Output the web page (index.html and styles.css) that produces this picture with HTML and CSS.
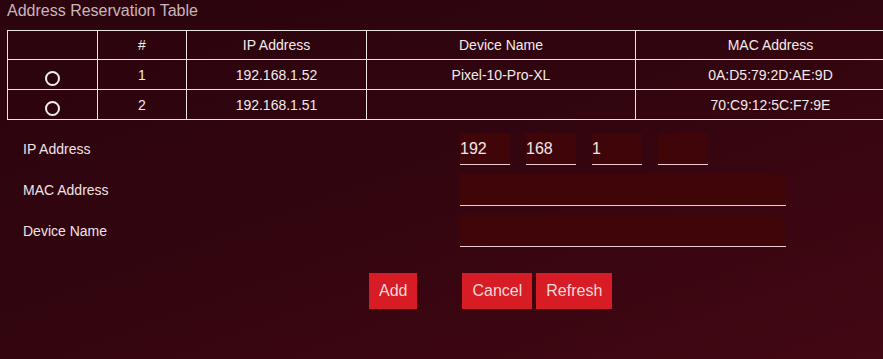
FILE: index.html
```html
<!DOCTYPE html>
<html>
<head>
<title>Address Reservation</title>
<link rel="stylesheet" href="styles.css">
</head>
<body>
<div class="page">
<div class="title">Address Reservation Table</div>
<table class="list">
<tr><th class="c1"></th><th class="c2">#</th><th class="c3">IP Address</th><th class="c4">Device Name</th><th class="c5">MAC Address</th></tr>
<tr><td class="sel"><span class="radio"></span></td><td>1</td><td>192.168.1.52</td><td>Pixel-10-Pro-XL</td><td>0A:D5:79:2D:AE:9D</td></tr>
<tr><td class="sel"><span class="radio"></span></td><td>2</td><td>192.168.1.51</td><td></td><td>70:C9:12:5C:F7:9E</td></tr>
</table>
<div class="form">
<label class="lbl">IP Address</label>
<div class="ip">
<input type="text" class="octet" value="192"><span class="dot">.</span>
<input type="text" class="octet" value="168"><span class="dot">.</span>
<input type="text" class="octet" value="1"><span class="dot">.</span>
<input type="text" class="octet" value="">
</div>
<label class="lbl">MAC Address</label>
<div><input type="text" class="field" value=""></div>
<label class="lbl">Device Name</label>
<div><input type="text" class="field" value=""></div>
</div>
<div class="actions">
<button class="btn">Add</button>
<div class="group">
<button class="btn">Cancel</button>
<button class="btn">Refresh</button>
</div>
</div>
</div>
</body>
</html>
```

FILE: styles.css
```css
html,body{height:100%}
body{margin:0;overflow:hidden;font-family:"Liberation Sans",Arial,sans-serif;color:#f1e4e7;background:linear-gradient(160deg,#2b040d 0%,#31050f 45%,#3b0611 75%,#420814 100%)}
.page{padding:1px 0 0 7px}
.title{font-size:16px;line-height:20px;color:#c9b6bb;margin-bottom:9px}
.list{width:893px;border-collapse:collapse;table-layout:fixed;font-size:14px}
.list th,.list td{border:1px solid #ece2e4;padding:0;text-align:center;font-weight:normal;color:#f3ebec}
.list th{height:28px}
.list td{height:29px}
.c1{width:89px}
.c2{width:88px}
.c3{width:179px}
.c4{width:268px}
.c5{width:269px}
.list td.sel{vertical-align:top;padding-top:11px;height:18px}
.radio{display:block;width:11px;height:11px;margin:0 auto;border:2px solid #f4eeef;border-radius:50%}
.form{display:grid;grid-template-columns:453px 1fr;row-gap:9px;margin-top:13px}
.lbl{font-size:14px;padding-left:16px;display:flex;align-items:center;color:#f2e2e6}
.ip{display:flex;align-items:flex-end}
.octet,.field{box-sizing:border-box;height:32px;padding:0;border:none;border-bottom:1px solid #ecccd3;background:#3f0508;color:#f4e6e6;font-family:"Liberation Sans",Arial,sans-serif;font-size:16px;outline:none}
.octet{width:50px}
.field{width:326px}
.dot{width:16px;text-align:center;font-size:12px;line-height:10px;color:#1c0205}
.actions{display:flex;gap:45px;margin-top:26px;padding-left:362px}
.group{display:flex;gap:4px}
.btn{height:36px;padding:0 10px;border:none;background:#d81c25;color:#f7d8d8;font-family:"Liberation Sans",Arial,sans-serif;font-size:16px;cursor:pointer}
```
